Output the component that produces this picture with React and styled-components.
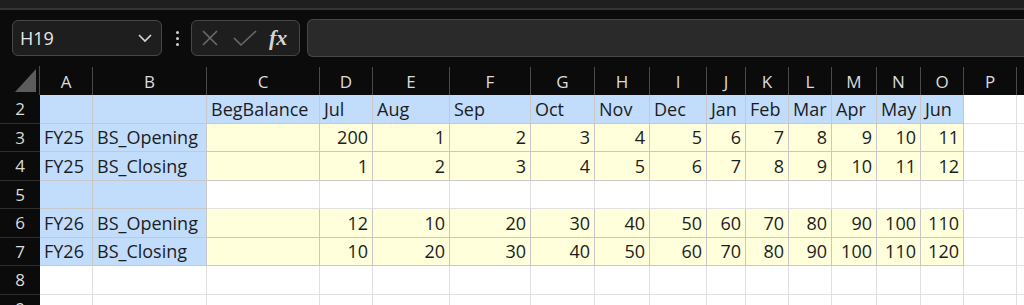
import styled, { createGlobalStyle } from 'styled-components';

const GlobalStyle = createGlobalStyle`
  html, body {
    margin: 0;
    padding: 0;
    background: #0b0b0b;
  }
  body {
    font-family: 'Open Sans', 'Liberation Sans', sans-serif;
    overflow: hidden;
  }
`;

const COLS = ['A', 'B', 'C', 'D', 'E', 'F', 'G', 'H', 'I', 'J', 'K', 'L', 'M', 'N', 'O', 'P', 'Q'];
const WIDTHS = [53, 114, 113, 53, 77, 81, 64, 55, 57, 39, 43, 43, 45, 44, 43, 53, 60];
const MONTHS = ['Jul', 'Aug', 'Sep', 'Oct', 'Nov', 'Dec', 'Jan', 'Feb', 'Mar', 'Apr', 'May', 'Jun'];

const rows = [
  { n: 2, kind: 'head' },
  { n: 3, a: 'FY25', b: 'BS_Opening', vals: [200, 1, 2, 3, 4, 5, 6, 7, 8, 9, 10, 11] },
  { n: 4, a: 'FY25', b: 'BS_Closing', vals: [1, 2, 3, 4, 5, 6, 7, 8, 9, 10, 11, 12] },
  { n: 5, kind: 'gap' },
  { n: 6, a: 'FY26', b: 'BS_Opening', vals: [12, 10, 20, 30, 40, 50, 60, 70, 80, 90, 100, 110] },
  { n: 7, a: 'FY26', b: 'BS_Closing', vals: [10, 20, 30, 40, 50, 60, 70, 80, 90, 100, 110, 120] },
  { n: 8, kind: 'empty' },
  { n: 9, kind: 'empty' },
];

const App = () => {
  const renderRow = (row) => {
    const cells = [];
    if (row.kind === 'empty') {
      COLS.forEach((c) => cells.push(<Cell key={c} />));
    } else if (row.kind === 'head') {
      cells.push(<Cell key="A" $fill="blue" />);
      cells.push(<Cell key="B" $fill="blue" />);
      cells.push(<Cell key="C" $fill="blue">BegBalance</Cell>);
      MONTHS.forEach((m) => cells.push(<Cell key={m} $fill="blue">{m}</Cell>));
      cells.push(<Cell key="P" />);
      cells.push(<Cell key="Q" />);
    } else if (row.kind === 'gap') {
      cells.push(<Cell key="A" $fill="blue" />);
      cells.push(<Cell key="B" $fill="blue" />);
      COLS.slice(2).forEach((c) => cells.push(<Cell key={c} />));
    } else {
      cells.push(<Cell key="A" $fill="blue">{row.a}</Cell>);
      cells.push(<Cell key="B" $fill="blue">{row.b}</Cell>);
      cells.push(<Cell key="C" $fill="yellow" />);
      row.vals.forEach((v, i) => (
        cells.push(<Cell key={i} $fill="yellow" $num>{v}</Cell>)
      ));
      cells.push(<Cell key="P" />);
      cells.push(<Cell key="Q" />);
    }
    return [<RowHeader key={'r' + row.n}>{row.n}</RowHeader>, ...cells.map((c, i) => ({ ...c, key: row.n + '-' + i }))];
  };

  return (
    <>
      <GlobalStyle />
      <Window>
        <TopStrip />
        <FormulaBar>
          <NameBox>
            <span>H19</span>
            <svg width="16" height="10" viewBox="0 0 16 10">
              <polyline points="2,2 8,8 14,2" fill="none" stroke="#d6d6d6" strokeWidth="1.6" />
            </svg>
          </NameBox>
          <Kebab>
            <i />
            <i />
            <i />
          </Kebab>
          <FxBox>
            <svg width="18" height="18" viewBox="0 0 18 18">
              <path d="M2 2 L16 16 M16 2 L2 16" stroke="#6b6b6b" strokeWidth="1.6" />
            </svg>
            <svg width="24" height="18" viewBox="0 0 24 18">
              <polyline points="1,9 8,16 23,2" fill="none" stroke="#6b6b6b" strokeWidth="1.6" />
            </svg>
            <Fx>fx</Fx>
          </FxBox>
          <FormulaInput />
        </FormulaBar>
        <Sheet $cols={WIDTHS}>
          <Corner>
            <svg width="22" height="23" viewBox="0 0 22 23">
              <polygon points="21,0 21,23 0,23" fill="#5c5c5c" />
            </svg>
          </Corner>
          {COLS.map((c) => (
            <ColHeader key={c}>{c === 'Q' ? '' : c}</ColHeader>
          ))}
          {rows.map(renderRow)}
        </Sheet>
      </Window>
    </>
  );
};

export default App;

const Window = styled.div`
  width: 1024px;
  height: 305px;
  overflow: hidden;
  background: #0b0b0b;
`;

const TopStrip = styled.div`
  height: 8px;
  background: #1f1f1f;
  border-bottom: 2px solid #343434;
`;

const FormulaBar = styled.div`
  display: flex;
  align-items: center;
  height: 56px;
  padding: 0 0 0 12px;
  box-sizing: border-box;
`;

const NameBox = styled.div`
  display: flex;
  align-items: center;
  justify-content: space-between;
  width: 150px;
  height: 36px;
  box-sizing: border-box;
  padding: 0 8px 0 7px;
  background: #1e1e1e;
  border: 1px solid #474747;
  border-radius: 6px;
  color: #e8e8e8;
  font-size: 18px;
`;

const Kebab = styled.div`
  display: flex;
  flex-direction: column;
  gap: 3px;
  margin: 0 12px 0 14px;

  & i {
    display: block;
    width: 3px;
    height: 3px;
    border-radius: 50%;
    background: #d0d0d0;
  }
`;

const FxBox = styled.div`
  display: flex;
  align-items: center;
  gap: 14px;
  width: 109px;
  height: 36px;
  box-sizing: border-box;
  padding: 0 6px 0 9px;
  background: #1e1e1e;
  border: 1px solid #474747;
  border-radius: 6px;
`;

const Fx = styled.span`
  font-family: 'Liberation Serif', 'DejaVu Serif', serif;
  font-style: italic;
  font-weight: bold;
  font-size: 22px;
  color: #d4d4d4;
  margin-left: -2px;
`;

const FormulaInput = styled.div`
  flex: 1;
  height: 36px;
  margin-left: 7px;
  background: #2a2a2a;
  border: 1px solid #474747;
  border-right: none;
  border-radius: 6px 0 0 6px;
`;

const Sheet = styled.div`
  display: grid;
  grid-template-columns: 40px ${(p) => p.$cols.map((w) => w + 'px').join(' ')};
  grid-template-rows: 29px;
  grid-auto-rows: 28.5px;
  font-size: 18px;
`;

const Corner = styled.div`
  display: flex;
  align-items: flex-end;
  justify-content: flex-end;
  padding: 0 2px 3px 0;
  border-right: 1px solid #4a4a4a;
`;

const ColHeader = styled.div`
  display: flex;
  align-items: center;
  justify-content: center;
  box-sizing: border-box;
  border-right: 1px solid #4a4a4a;
  margin-top: 1px;
  color: #dcdcdc;
  font-size: 17px;
`;

const RowHeader = styled.div`
  display: flex;
  align-items: center;
  justify-content: center;
  box-sizing: border-box;
  border-bottom: 1px solid #2e2e2e;
  color: #dcdcdc;
  font-size: 17px;
`;

const fills = {
  blue: '#c2dcfc',
  yellow: '#ffffdc',
};

const Cell = styled.div`
  display: flex;
  align-items: center;
  justify-content: ${(p) => (p.$num ? 'flex-end' : 'flex-start')};
  box-sizing: border-box;
  padding: 0 4px 0 4px;
  white-space: nowrap;
  overflow: visible;
  background: ${(p) => fills[p.$fill] || '#ffffff'};
  border-right: 1px solid ${(p) => (p.$fill ? '#c8c8c8' : '#e0e0e0')};
  border-bottom: 1px solid ${(p) => (p.$fill ? '#c8c8c8' : '#e0e0e0')};
  color: #1c1c1c;
  line-height: 28px;
`;
